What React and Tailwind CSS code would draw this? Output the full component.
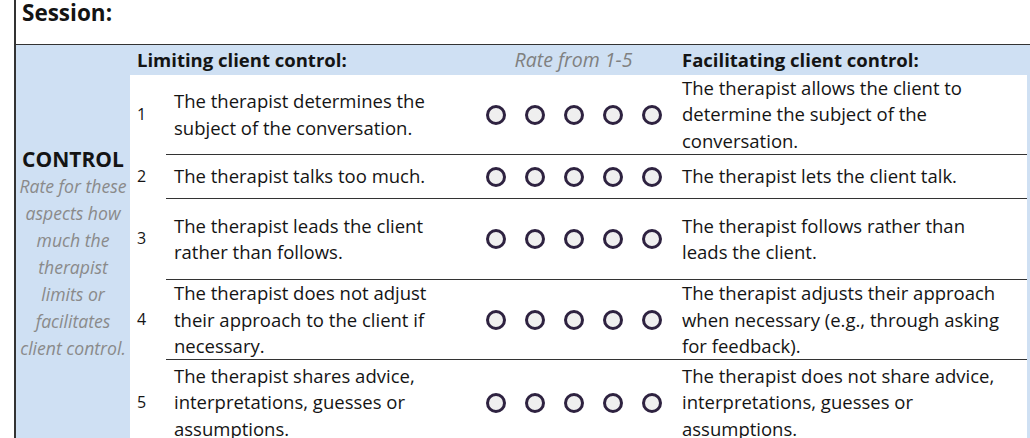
import React from 'react';

const rows = [
    {
        n: 1,
        h: 'h-[79px]',
        left: ['The therapist determines the', 'subject of the conversation.'],
        right: ['The therapist allows the client to', 'determine the subject of the', 'conversation.'],
    },
    {
        n: 2,
        h: 'h-[44px]',
        left: ['The therapist talks too much.'],
        right: ['The therapist lets the client talk.'],
    },
    {
        n: 3,
        h: 'h-[81px]',
        left: ['The therapist leads the client', 'rather than follows.'],
        right: ['The therapist follows rather than', 'leads the client.'],
    },
    {
        n: 4,
        h: 'h-[80px]',
        left: ['The therapist does not adjust', 'their approach to the client if', 'necessary.'],
        right: ['The therapist adjusts their approach', 'when necessary (e.g., through asking', 'for feedback).'],
    },
    {
        n: 5,
        h: 'h-[86px]',
        left: ['The therapist shares advice,', 'interpretations, guesses or', 'assumptions.'],
        right: ['The therapist does not share advice,', 'interpretations, guesses or', 'assumptions.'],
    },
];

const sideLines = ['Rate for these', 'aspects how', 'much the', 'therapist', 'limits or', 'facilitates', 'client control.'];

const Lines = ({ lines }) => (
    <div className="whitespace-nowrap">
        {lines.map((l, i) => (
            <div key={i}>{l}</div>
        ))}
    </div>
);

const Circles = () => (
    <div className="flex items-center justify-center gap-[19px]">
        {[1, 2, 3, 4, 5].map(i => (
            <span key={i} className="block w-[20px] h-[20px] rounded-full border-[3px] border-[#2e2240] bg-[#efefef]"></span>
        ))}
    </div>
);

const App = () => {
    return (
        <div className="w-[1030px] h-[438px] overflow-hidden bg-white font-['Open_Sans',sans-serif] text-[#141414]">
            <div className="ml-[14px] h-full border-l-2 border-[#333]">
                {/* Session */}
                <div className="h-[45px] border-b border-[#333] pl-[6px] pt-[1px] text-[22.5px] font-bold leading-[24px]">
                    Session:
                </div>

                <div className="flex bg-[#cfe0f3]">
                    {/* side label */}
                    <div className="w-[114px] shrink-0 pt-[101px] text-center">
                        <div className="text-[21px] font-bold leading-[27px]">CONTROL</div>
                        <div className="text-[17.6px] italic leading-[27px] text-[#8a8a8a] whitespace-nowrap">
                            {sideLines.map((l, i) => (
                                <div key={i}>{l}</div>
                            ))}
                        </div>
                    </div>

                    <div className="flex-1 text-[18.5px] leading-[26.5px]">
                        {/* header */}
                        <div className="grid grid-cols-[342px_203px_352px] h-[30px] items-center">
                            <div className="pl-[7px] font-bold">Limiting client control:</div>
                            <div className="text-center italic text-[19.5px] text-[#808080]">Rate from 1-5</div>
                            <div className="pl-[7px] font-bold">Facilitating client control:</div>
                        </div>

                        {rows.map((r, idx) => (
                            <div key={r.n} className={`mr-[3px] bg-white grid grid-cols-[36px_306px_203px_352px] ${r.h}`}>
                                <div className="flex items-center pl-[7px] text-[16px]">{r.n}</div>
                                <div className={`flex items-center pl-[8px] ${idx > 0 ? 'border-t border-[#333]' : ''}`}>
                                    <Lines lines={r.left} />
                                </div>
                                <div className={`flex items-center justify-center ${idx > 0 ? 'border-t border-[#333]' : ''}`}>
                                    <Circles />
                                </div>
                                <div className={`flex items-center pl-[7px] overflow-hidden ${idx > 0 ? 'border-t border-[#333]' : ''}`}>
                                    <Lines lines={r.right} />
                                </div>
                            </div>
                        ))}
                    </div>
                </div>
            </div>
        </div>
    );
};

export default App;
